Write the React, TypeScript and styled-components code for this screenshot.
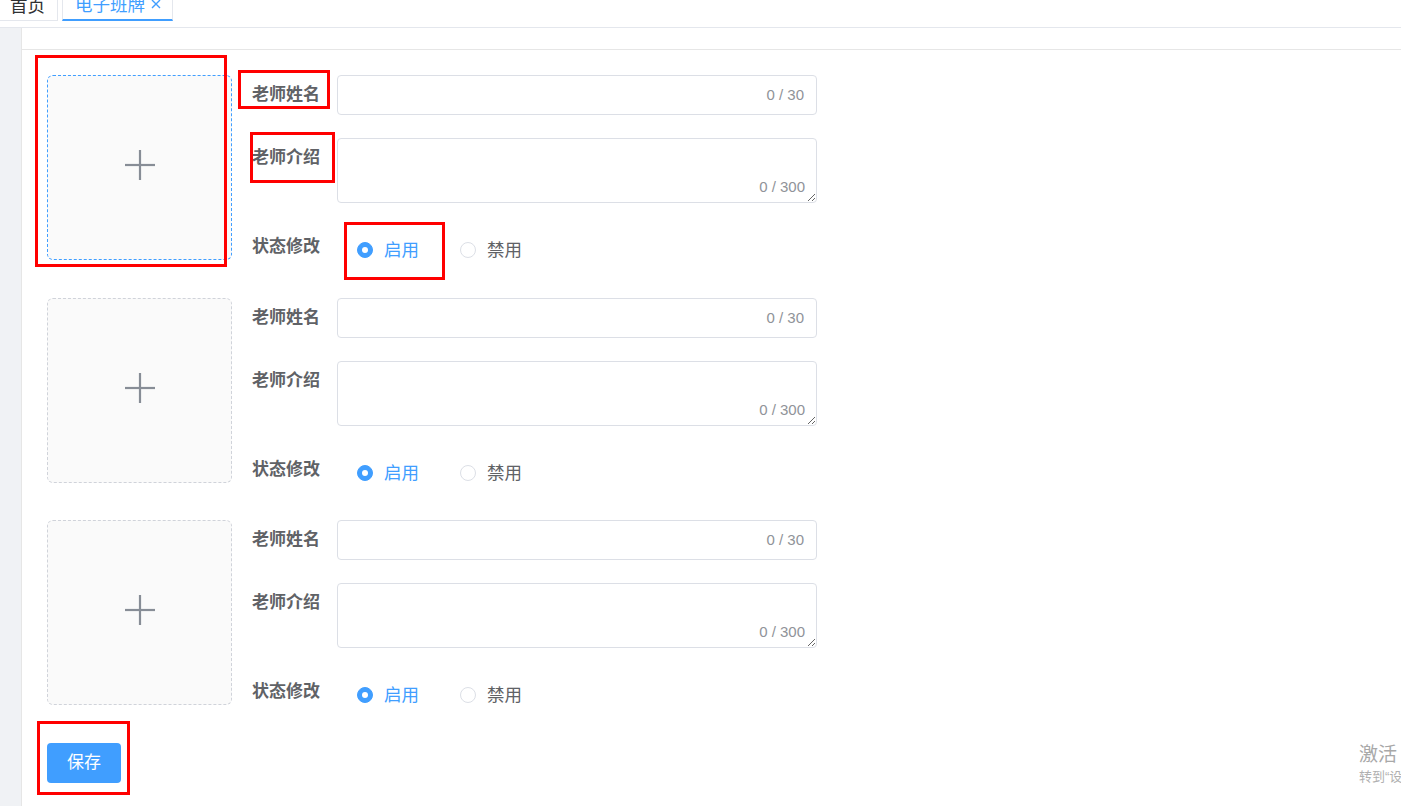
import React from "react";
import styled, { createGlobalStyle } from "styled-components";

const GlobalStyle = createGlobalStyle`
  html, body {
    margin: 0;
    padding: 0;
    background: #ffffff;
  }
  body {
    font-family: "Liberation Sans", "Noto Sans CJK SC", sans-serif;
  }
  * {
    box-sizing: border-box;
  }
`;

const Page = styled.div`
  position: relative;
  width: 1401px;
  height: 806px;
  overflow: hidden;
  background: #ffffff;
`;

const TabBar = styled.div`
  height: 28px;
  border-bottom: 1px solid #e4e7ed;
  overflow: hidden;
`;

const TabList = styled.div`
  display: flex;
  margin-top: -13px;
  height: 34px;
`;

const Tab = styled.div<{ $active?: boolean }>`
  display: flex;
  align-items: center;
  height: 34px;
  padding: ${({ $active }) => ($active ? "0 0 0 12px" : "0 0 0 10px")};
  margin-left: ${({ $active }) => ($active ? "4px" : "0")};
  border: 1px solid #e4e7ed;
  border-left: ${({ $active }) => ($active ? "1px solid #e4e7ed" : "none")};
  border-bottom: ${({ $active }) =>
    $active ? "2px solid #409eff" : "1px solid #e4e7ed"};
  color: ${({ $active }) => ($active ? "#409eff" : "#303133")};
  font-size: 17.5px;
  white-space: nowrap;
  width: ${({ $active }) => ($active ? "111px" : "58px")};
`;

const TabClose = styled.svg`
  margin-left: 6px;
  margin-top: 1px;
  flex-shrink: 0;
`;

const Main = styled.div`
  display: flex;
  height: 778px;
`;

const Sidebar = styled.div`
  width: 22px;
  background: #f0f2f5;
  border-right: 1px solid #e6e6e6;
`;

const Content = styled.div`
  flex: 1;
  display: flex;
  flex-direction: column;
`;

const TopStrip = styled.div`
  height: 22px;
  border-bottom: 1px solid #e6e6e6;
`;

const Body = styled.div`
  padding: 25px 0 0 25px;
`;

const Group = styled.div`
  display: flex;
  align-items: flex-start;
  margin-bottom: 27.5px;
`;

const Uploader = styled.div<{ $hover?: boolean }>`
  width: 185px;
  height: 185px;
  flex-shrink: 0;
  display: flex;
  align-items: center;
  justify-content: center;
  padding-bottom: 5px;
  background: #fafafa;
  border: 1px dashed ${({ $hover }) => ($hover ? "#409eff" : "#d0d3da")};
  border-radius: 6px;
`;

const Form = styled.div`
  margin-left: 20px;
  display: flex;
  flex-direction: column;
`;

const FormItem = styled.div<{ $gap: number }>`
  display: flex;
  align-items: flex-start;
  margin-bottom: ${({ $gap }) => $gap}px;
`;

const Label = styled.div<{ $shift?: number }>`
  width: 85px;
  padding-top: ${({ $shift }) => $shift || 0}px;
  line-height: 40px;
  font-size: 17px;
  font-weight: 700;
  color: #606266;
  white-space: nowrap;
`;

const Field = styled.div`
  position: relative;
  width: 480px;
`;

const TextInput = styled.input`
  display: block;
  width: 100%;
  height: 40px;
  padding: 0 60px 0 15px;
  border: 1px solid #dcdfe6;
  border-radius: 4px;
  outline: none;
  font-size: 15px;
  color: #606266;
  font-family: inherit;
`;

const TextArea = styled.textarea`
  display: block;
  width: 100%;
  height: 65px;
  padding: 5px 15px;
  border: 1px solid #dcdfe6;
  border-radius: 4px;
  outline: none;
  resize: vertical;
  font-size: 15px;
  color: #606266;
  font-family: inherit;
`;

const Counter = styled.span<{ $bottom?: boolean }>`
  position: absolute;
  right: ${({ $bottom }) => ($bottom ? "12px" : "13px")};
  top: ${({ $bottom }) => ($bottom ? "auto" : "11px")};
  bottom: ${({ $bottom }) => ($bottom ? "7px" : "auto")};
  font-size: 15px;
  line-height: 18px;
  color: #909399;
  pointer-events: none;
`;

const RadioGroup = styled.div`
  display: flex;
  align-items: center;
  height: 40px;
  margin-top: 5px;
  margin-left: 20px;
  gap: 41px;
`;

const Radio = styled.label<{ $checked?: boolean }>`
  display: flex;
  align-items: center;
  gap: 11px;
  font-size: 17.5px;
  color: ${({ $checked }) => ($checked ? "#409eff" : "#606266")};
  cursor: pointer;
`;

const RadioText = styled.span`
  padding-bottom: 3px;
`;

const RadioDot = styled.span<{ $checked?: boolean }>`
  position: relative;
  width: 16px;
  height: 16px;
  border-radius: 50%;
  border: 1px solid ${({ $checked }) => ($checked ? "#409eff" : "#dcdfe6")};
  background: ${({ $checked }) => ($checked ? "#409eff" : "#ffffff")};

  &::after {
    content: "";
    position: absolute;
    left: 50%;
    top: 50%;
    width: 6px;
    height: 6px;
    margin: -3px 0 0 -3px;
    border-radius: 50%;
    background: #ffffff;
    display: ${({ $checked }) => ($checked ? "block" : "none")};
  }
`;

const SaveButton = styled.button`
  width: 74px;
  height: 40px;
  margin-top: 0.5px;
  padding: 0 0 5px;
  border: none;
  border-radius: 4px;
  background: #409eff;
  color: #ffffff;
  font-size: 17px;
  font-family: inherit;
  cursor: pointer;
`;

const Mark = styled.div<{ $x: number; $y: number; $w: number; $h: number }>`
  position: absolute;
  left: ${({ $x }) => $x}px;
  top: ${({ $y }) => $y}px;
  width: ${({ $w }) => $w}px;
  height: ${({ $h }) => $h}px;
  border: 3px solid #ff0000;
  pointer-events: none;
`;

const Watermark = styled.div`
  position: absolute;
  left: 1359px;
  top: 743px;
  color: #a8a8a8;
  white-space: nowrap;
`;

const WatermarkTitle = styled.div`
  font-size: 19px;
  line-height: 24px;
`;

const WatermarkHint = styled.div`
  font-size: 13px;
  line-height: 20px;
  color: #b0b0b0;
`;

const PlusIcon = () => (
  <svg width="30" height="30" viewBox="0 0 30 30">
    <line x1="15" y1="0" x2="15" y2="30" stroke="#878d96" strokeWidth="2.2" />
    <line x1="0" y1="15" x2="30" y2="15" stroke="#878d96" strokeWidth="2.2" />
  </svg>
);

const CloseIcon = () => (
  <TabClose width="10" height="10" viewBox="0 0 10 10">
    <path d="M1 1 L9 9 M9 1 L1 9" stroke="#409eff" strokeWidth="1.4" />
  </TabClose>
);

const teachers = [0, 1, 2];

export default function App() {
  return (
    <Page>
      <GlobalStyle />
      <TabBar>
        <TabList>
          <Tab>首页</Tab>
          <Tab $active>
            电子班牌
            <CloseIcon />
          </Tab>
        </TabList>
      </TabBar>
      <Main>
        <Sidebar />
        <Content>
          <TopStrip />
          <Body>
            {teachers.map((i) => (
              <Group key={i}>
                <Uploader $hover={i === 0}>
                  <PlusIcon />
                </Uploader>
                <Form>
                  <FormItem $gap={23}>
                    <Label>老师姓名</Label>
                    <Field>
                      <TextInput maxLength={30} />
                      <Counter>0 / 30</Counter>
                    </Field>
                  </FormItem>
                  <FormItem $gap={22}>
                    <Label>老师介绍</Label>
                    <Field>
                      <TextArea maxLength={300} />
                      <Counter $bottom>0 / 300</Counter>
                    </Field>
                  </FormItem>
                  <FormItem $gap={0}>
                    <Label $shift={2}>状态修改</Label>
                    <RadioGroup>
                      <Radio $checked>
                        <RadioDot $checked />
                        <RadioText>启用</RadioText>
                      </Radio>
                      <Radio>
                        <RadioDot />
                        <RadioText>禁用</RadioText>
                      </Radio>
                    </RadioGroup>
                  </FormItem>
                </Form>
              </Group>
            ))}
            <SaveButton>保存</SaveButton>
          </Body>
        </Content>
      </Main>

      <Mark $x={35} $y={55} $w={192} $h={212} />
      <Mark $x={238} $y={70} $w={92} $h={39} />
      <Mark $x={250} $y={132} $w={85} $h={51} />
      <Mark $x={344} $y={222} $w={101} $h={58} />
      <Mark $x={37} $y={721} $w={93} $h={74} />

      <Watermark>
        <WatermarkTitle>激活 Windows</WatermarkTitle>
        <WatermarkHint>转到“设置”以激活 Windows。</WatermarkHint>
      </Watermark>
    </Page>
  );
}
